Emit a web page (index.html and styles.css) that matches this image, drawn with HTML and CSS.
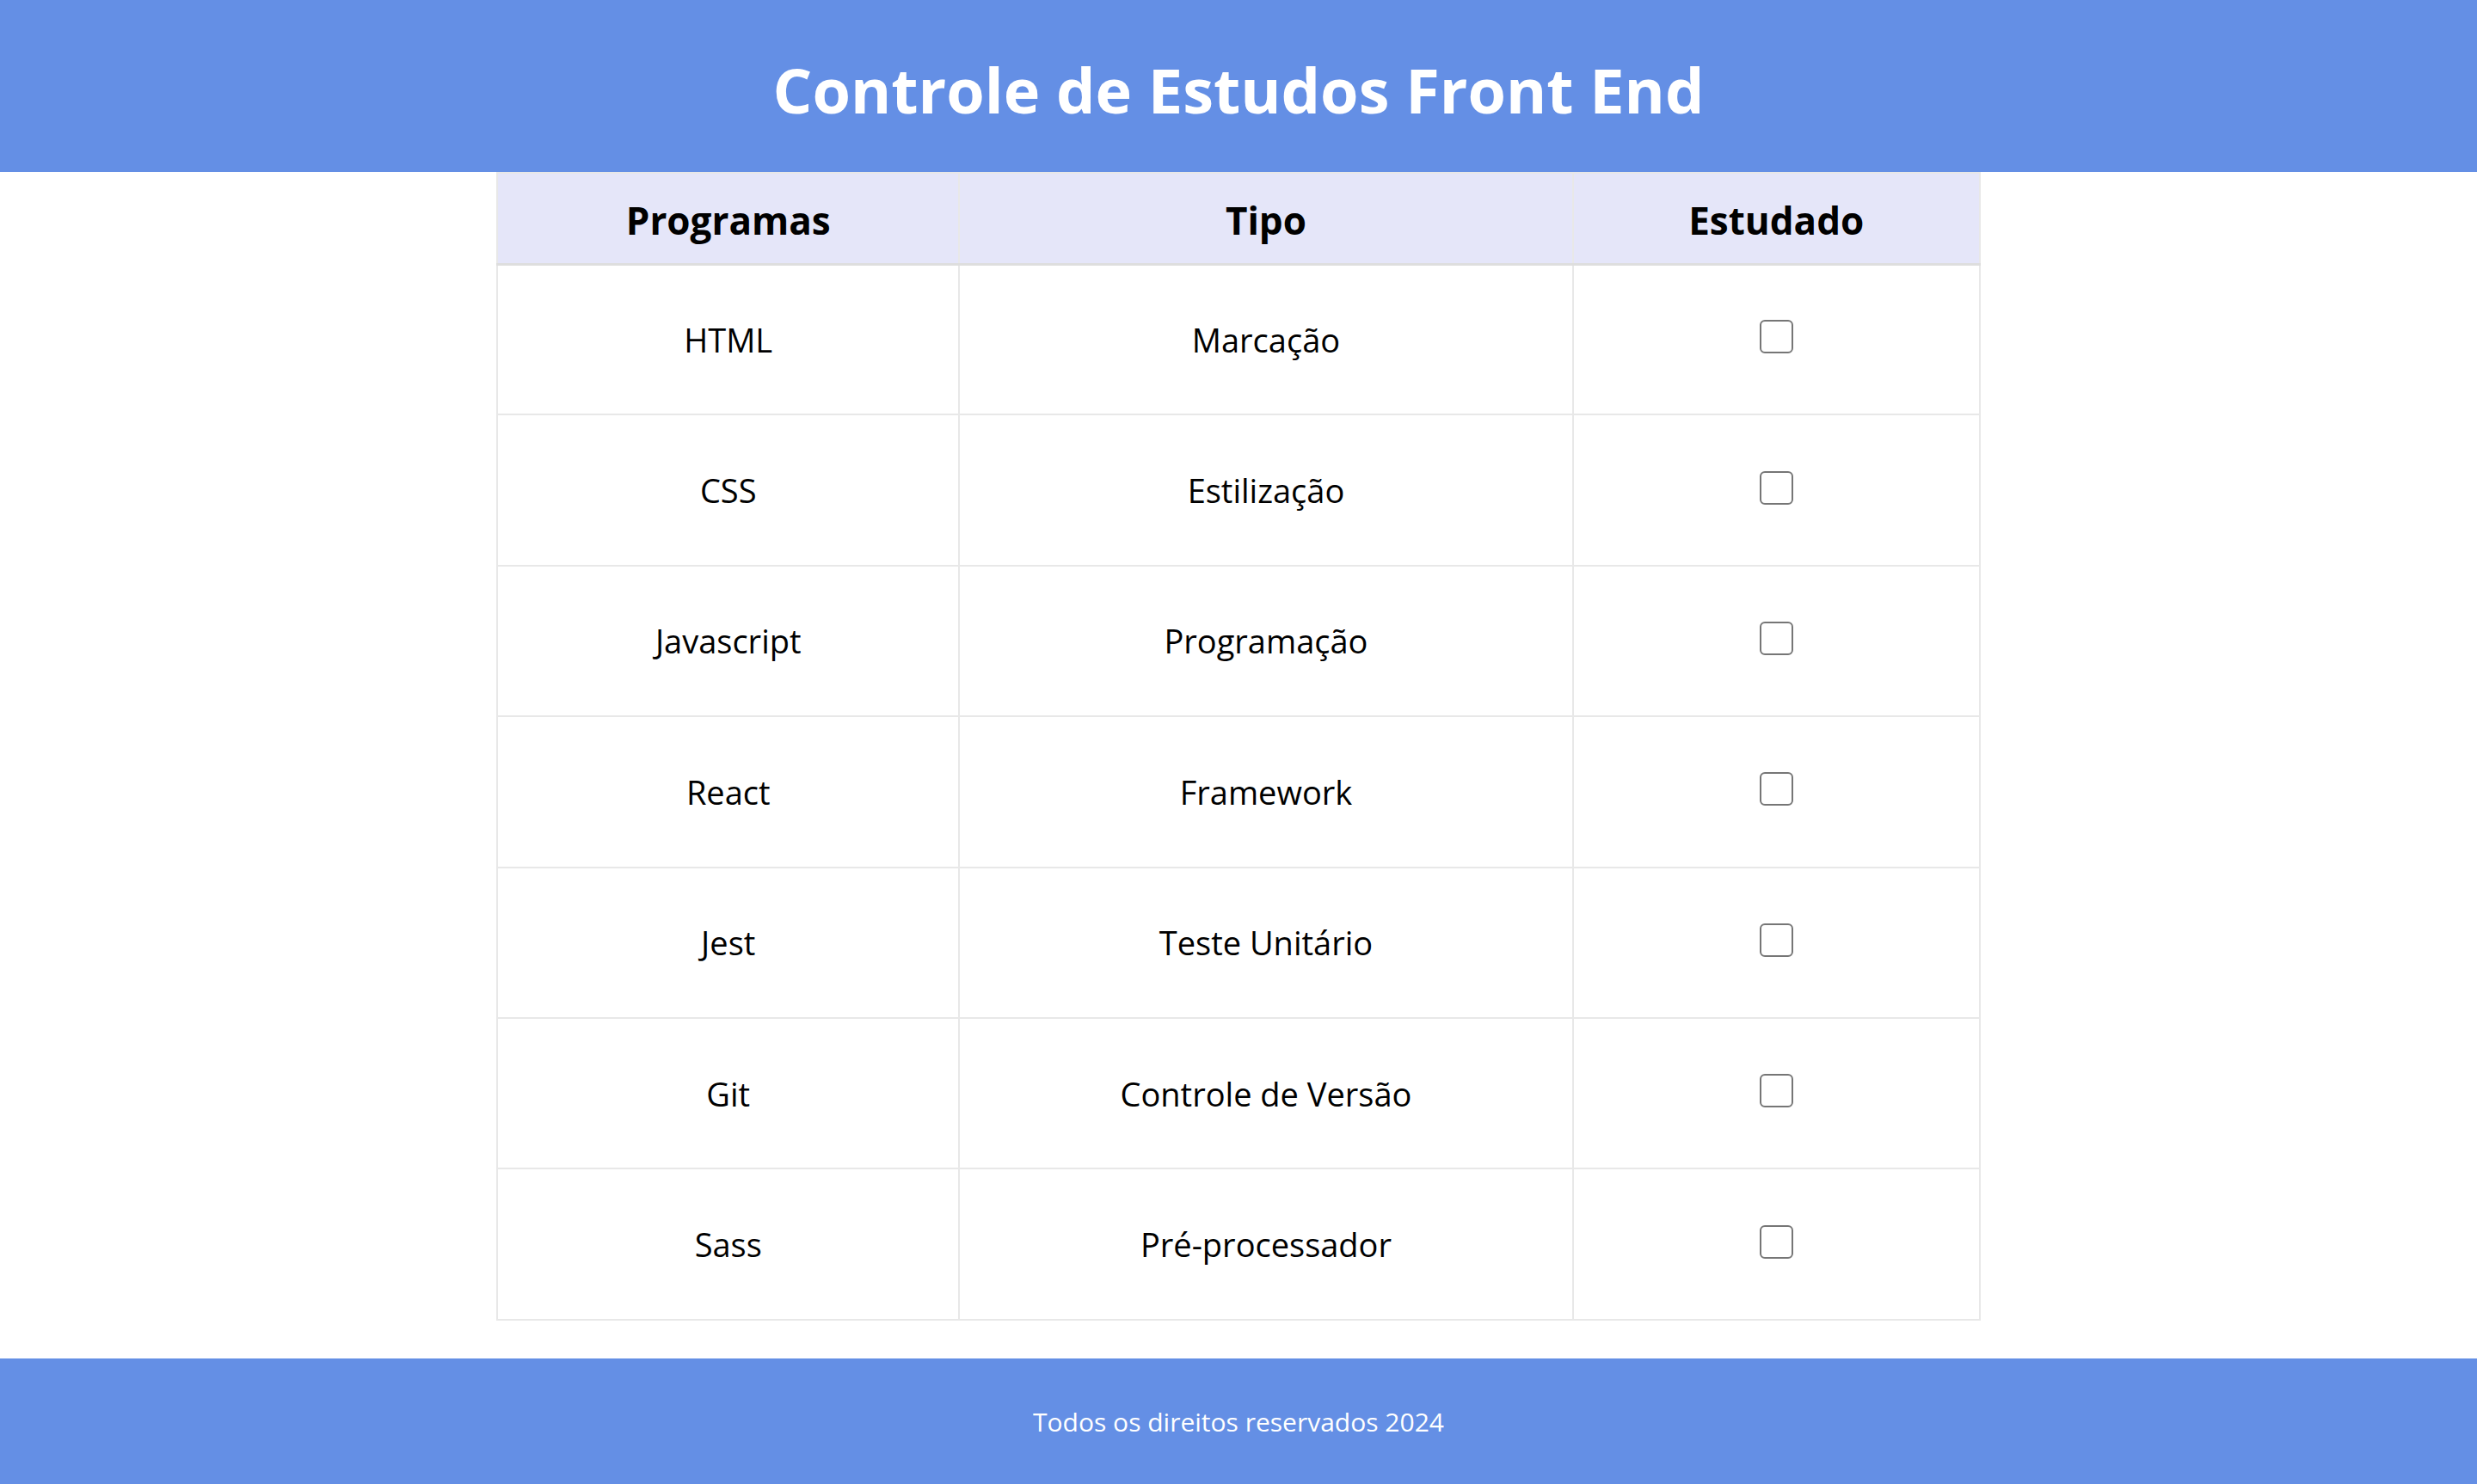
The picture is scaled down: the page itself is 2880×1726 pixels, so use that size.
FILE: index.html
```html
<!DOCTYPE html>
<html lang="pt-BR">
<head>
<meta charset="utf-8">
<title>Controle de Estudos Front End</title>
<link rel="stylesheet" href="styles.css">
</head>
<body>
<header class="topbar">
  <h1 class="title">Controle de Estudos Front End</h1>
</header>
<main class="content">
  <table class="study-table">
    <thead>
      <tr class="head-row">
        <th class="col-prog">Programas</th>
        <th class="col-tipo">Tipo</th>
        <th class="col-est">Estudado</th>
      </tr>
    </thead>
    <tbody>
      <tr class="body-row"><td>HTML</td><td>Marcação</td><td><input class="check" type="checkbox"></td></tr>
      <tr class="body-row"><td>CSS</td><td>Estilização</td><td><input class="check" type="checkbox"></td></tr>
      <tr class="body-row"><td>Javascript</td><td>Programação</td><td><input class="check" type="checkbox"></td></tr>
      <tr class="body-row"><td>React</td><td>Framework</td><td><input class="check" type="checkbox"></td></tr>
      <tr class="body-row"><td>Jest</td><td>Teste Unitário</td><td><input class="check" type="checkbox"></td></tr>
      <tr class="body-row"><td>Git</td><td>Controle de Versão</td><td><input class="check" type="checkbox"></td></tr>
      <tr class="body-row"><td>Sass</td><td>Pré-processador</td><td><input class="check" type="checkbox"></td></tr>
    </tbody>
  </table>
</main>
<footer class="footer">
  <p class="footer-text">Todos os direitos reservados 2024</p>
</footer>
</body>
</html>
```
FILE: styles.css
```css
* { box-sizing: border-box; }
html, body { margin: 0; padding: 0; }
body {
  background: #ffffff;
  font-family: "Open Sans", "Noto Sans", "Liberation Sans", sans-serif;
  color: #000;
}
.topbar {
  background: #648fe5;
  height: 200px;
  padding-top: 68px;
  text-align: center;
}
.title {
  margin: 0;
  color: #fff;
  font-size: 72px;
  line-height: 72px;
  font-weight: 700;
}
.content {
  display: flex;
  justify-content: center;
  padding-bottom: 44px;
}
.study-table {
  width: 1726px;
  border-collapse: collapse;
  border: 2px solid #e0e0e0;
}
.study-table th,
.study-table td {
  border: 2px solid #e8e8e8;
  text-align: center;
  vertical-align: middle;
  padding: 0;
}
.head-row { height: 106px; background: #e5e6f9; }
.head-row th {
  font-size: 44px;
  line-height: 44px;
  font-weight: 700;
  padding-top: 4px;
  border-bottom: 3px solid #dedede;
}
.col-prog { width: 538px; }
.col-tipo { width: 714px; }
.col-est { width: 474px; }
.body-row { height: 175.4px; }
.body-row td {
  font-size: 38px;
  line-height: 38px;
  font-weight: 400;
}
.check {
  appearance: none;
  -webkit-appearance: none;
  display: block;
  margin: -6px auto 0;
  width: 39px;
  height: 39px;
  border: 2.5px solid #767676;
  border-radius: 6px;
  background: #fff;
}
.footer {
  background: #648fe5;
  height: 146px;
  padding-top: 59px;
  text-align: center;
}
.footer-text {
  margin: 0;
  color: #fff;
  font-size: 30px;
  line-height: 30px;
}
```
